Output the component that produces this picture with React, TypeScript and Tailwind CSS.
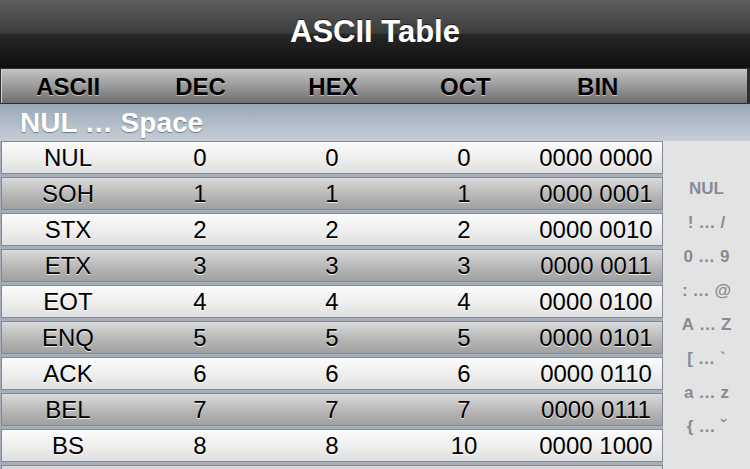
import React from "react";

type Row = { name: string; dec: number };

// only the rows that fit on screen; the last one is cut by the bottom edge
const NAMES = ["NUL", "SOH", "STX", "ETX", "EOT", "ENQ", "ACK", "BEL", "BS"];

const ROWS: Row[] = NAMES.map((name, dec) => ({ name, dec }));

const INDEX = [
  ["NUL"],
  ["!", "/"],
  ["0", "9"],
  [":", "@"],
  ["A", "Z"],
  ["[", "`"],
  ["a", "z"],
  ["{", "ˇ"]
];

function bin(n: number): string {
  const s = n.toString(2).padStart(8, "0");
  return `${s.slice(0, 4)} ${s.slice(4)}`;
}

function rowBg(dark: boolean): string {
  return dark
    ? "bg-[linear-gradient(180deg,#dadada_0%,#b4b4b4_60%,#a0a0a0_100%)]"
    : "bg-[linear-gradient(180deg,#fcfcfc_0%,#ececec_60%,#dfdfdf_100%)]";
}

function TableRow({ row, dark }: { row: Row; dark: boolean }) {
  const cells = [row.name, String(row.dec), row.dec.toString(16).toUpperCase(), row.dec.toString(8), bin(row.dec)];
  return (
    <div
      className={`grid h-[33px] shrink-0 grid-cols-5 items-center border border-[#7e8b99] text-[24px] leading-[31px] text-black [text-shadow:0_1px_0_rgba(255,255,255,0.8)] ${rowBg(dark)}`}
    >
      {cells.map((c, i) => (
        <span key={i} className="text-center">
          {c}
        </span>
      ))}
    </div>
  );
}

export default function App() {
  return (
    <div className="flex h-[469px] w-[750px] flex-col overflow-hidden bg-[#e3e3e3] font-['Liberation_Sans',Arial,sans-serif]">
      <header className="flex h-[68px] shrink-0 items-center justify-center pb-[4px] bg-[linear-gradient(180deg,#5e5e5e_0%,#3c3c3c_49%,#272727_50%,#0f0f0f_100%)]">
        <h1 className="text-[31px] font-bold text-white [text-shadow:0_-1px_0_rgba(0,0,0,0.6)]">ASCII Table</h1>
      </header>

      <div className="h-[36px] shrink-0 border-y border-[#2f2f2f] bg-[#2f2f2f] px-[1px]">
        <div className="mr-[2px] h-full border-l border-[#d8d8d8] bg-[linear-gradient(180deg,#c4c4c4_0%,#9a9a9a_50%,#6e6e6e_100%)]">
          <div className="grid h-full w-[662px] grid-cols-5 items-center text-[24px] font-bold text-black [text-shadow:0_1px_0_rgba(255,255,255,0.55)]">
            <span className="text-center">ASCII</span>
            <span className="text-center">DEC</span>
            <span className="text-center">HEX</span>
            <span className="text-center">OCT</span>
            <span className="text-center">BIN</span>
          </div>
        </div>
      </div>

      <div className="flex h-[37px] shrink-0 items-center bg-[linear-gradient(180deg,#9aa9b7_0%,#b3bec9_55%,#c6ced6_100%)] pl-[20px]">
        <span className="text-[28px] font-bold text-white [text-shadow:0_1px_1px_rgba(60,70,80,0.6)]">NUL … Space</span>
      </div>

      <div className="flex min-h-0 flex-1">
        <div className="flex w-[663px] shrink-0 flex-col gap-[3px] bg-[#a4afbb] pl-[1px]">
          {ROWS.map((row, i) => (
            <TableRow key={row.name} row={row} dark={i % 2 === 1} />
          ))}
          <div className={`h-[33px] shrink-0 border border-[#7e8b99] ${rowBg(true)}`} />
        </div>
        <aside className="flex flex-1 flex-col justify-center bg-[#e3e3e3] pt-[6px]">
          {INDEX.map((parts) => (
            <div
              key={parts.join("")}
              className="flex h-[34px] items-center justify-center gap-[5px] text-[17px] font-bold text-[#868c95]"
            >
              {parts.length === 1 ? (
                <span>{parts[0]}</span>
              ) : (
                <>
                  <span>{parts[0]}</span>
                  <span>…</span>
                  <span>{parts[1]}</span>
                </>
              )}
            </div>
          ))}
        </aside>
      </div>
    </div>
  );
}
